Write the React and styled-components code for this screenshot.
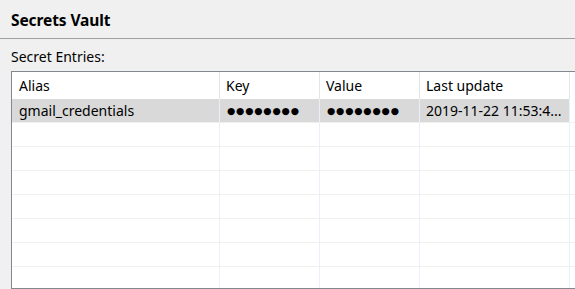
import React from "react";
import styled, { createGlobalStyle } from "styled-components";

const Global = createGlobalStyle`
  html, body { margin: 0; padding: 0; background: #f0f0f0; overflow: hidden; }
  body { font-family: "Noto Sans", "Open Sans", sans-serif; color: #000; }
`;

const Page = styled.div`
  width: 575px;
  height: 289px;
  display: flex;
  flex-direction: column;
  background: #f0f0f0;
  overflow: hidden;
`;

const TitleBar = styled.div`
  display: flex;
  align-items: center;
  padding-left: 11px;
  border-bottom: 1px solid #a0a0a0;
  box-sizing: border-box;
  height: 39px;
  flex-shrink: 0;
`;

const Title = styled.h1`
  margin: 0;
  font-size: 15.5px;
  font-weight: 700;
  letter-spacing: -0.1px;
  padding-top: 2px;
`;

const Section = styled.div`
  display: flex;
  flex-direction: column;
  padding-left: 11px;
  padding-top: 8px;
`;

const Label = styled.div`
  font-size: 14px;
  height: 24px;
  line-height: 20px;
  flex-shrink: 0;
`;

const Table = styled.div`
  border: 1px solid #828790;
  border-right: none;
  background: #fff;
  width: 580px;
  height: 218px;
  box-sizing: border-box;
  display: flex;
  flex-direction: column;
  overflow: hidden;
  flex-shrink: 0;
`;

const cols = "208px 100px 100px 150px 1fr";

const HeaderRow = styled.div`
  display: grid;
  grid-template-columns: ${cols};
  height: 27px;
  flex-shrink: 0;
`;

const HeaderCell = styled.div`
  font-size: 14px;
  padding-left: ${(p) => (p.$first ? 7 : 6)}px;
  display: flex;
  align-items: center;
  border-right: ${(p) => (p.$last ? "none" : "1px solid #e5e5e5")};
  white-space: nowrap;
  overflow: hidden;
`;

const Row = styled.div`
  display: grid;
  grid-template-columns: ${cols};
  height: 24px;
  box-sizing: border-box;
  border-bottom: 1px solid #f0f0f0;
  background: ${(p) => (p.$selected ? "#d9d9d9" : "#fff")};
  flex-shrink: 0;
`;

const Cell = styled.div`
  font-size: 14px;
  padding-left: ${(p) => (p.$first ? 7 : 6)}px;
  display: flex;
  align-items: center;
  border-right: 1px solid #eaf0fa;
  white-space: nowrap;
  overflow: hidden;
`;

const Filler = styled.div`
  background: #fff;
`;

const Dots = styled.span`
  font-size: 9.5px;
  letter-spacing: 0.8px;
  font-family: "DejaVu Sans", sans-serif;
  padding-left: 1px;
`;

const headers = ["Alias", "Key", "Value", "Last update", ""];

export default function App() {
  const empty = Array.from({ length: 8 });
  return (
    <>
      <Global />
      <Page>
        <TitleBar>
          <Title>Secrets Vault</Title>
        </TitleBar>
        <Section>
          <Label>Secret Entries:</Label>
          <Table>
            <HeaderRow>
              {headers.map((h, i) => (
                <HeaderCell key={i} $first={i === 0} $last={i === 4}>
                  {h}
                </HeaderCell>
              ))}
            </HeaderRow>
            <Row $selected>
              <Cell $first>gmail_credentials</Cell>
              <Cell><Dots>●●●●●●●●</Dots></Cell>
              <Cell><Dots>●●●●●●●●</Dots></Cell>
              <Cell>2019-11-22 11:53:4...</Cell>
              <Filler />
            </Row>
            {empty.map((_, r) => (
              <Row key={r}>
                <Cell $first />
                <Cell />
                <Cell />
                <Cell />
                <Filler />
              </Row>
            ))}
          </Table>
        </Section>
      </Page>
    </>
  );
}
